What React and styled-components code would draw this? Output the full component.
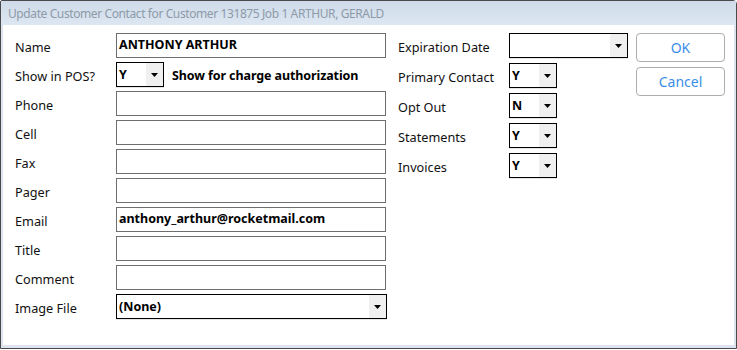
import React from "react";
import styled, { createGlobalStyle } from "styled-components";

const GlobalStyle = createGlobalStyle`
  html, body {
    margin: 0;
    padding: 0;
    background: #ffffff;
  }
  * {
    box-sizing: border-box;
  }
`;

const leftRows = [
  { label: "Name", value: "ANTHONY ARTHUR" },
  { label: "Show in POS?", pos: true },
  { label: "Phone", value: "" },
  { label: "Cell", value: "" },
  { label: "Fax", value: "" },
  { label: "Pager", value: "" },
  { label: "Email", value: "anthony_arthur@rocketmail.com" },
  { label: "Title", value: "" },
  { label: "Comment", value: "" },
  { label: "Image File", value: "(None)", select: true },
];

const rightRows = [
  { label: "Expiration Date", value: "", wide: true },
  { label: "Primary Contact", value: "Y" },
  { label: "Opt Out", value: "N" },
  { label: "Statements", value: "Y" },
  { label: "Invoices", value: "Y" },
];

const Arrow = () => (
  <svg width="7" height="4" viewBox="0 0 7 4">
    <path d="M0 0 H7 L3.5 4 Z" fill="#000" />
  </svg>
);

const Dropdown = ({ value, width }) => (
  <SelectBox $width={width}>
    <SelectValue>{value}</SelectValue>
    <ArrowButton>
      <Arrow />
    </ArrowButton>
  </SelectBox>
);

const App = () => {
  return (
    <>
      <GlobalStyle />
      <Window>
        <TitleBar>Update Customer Contact for Customer 131875 Job 1 ARTHUR, GERALD</TitleBar>
        <Body>
          <LeftColumn>
            {leftRows.map((row) => (
              <Row key={row.label}>
                <Label $width={101}>{row.label}</Label>
                {row.pos ? (
                  <>
                    <Dropdown value="Y" width={48} />
                    <Hint>Show for charge authorization</Hint>
                  </>
                ) : row.select ? (
                  <Dropdown value={row.value} width={271} />
                ) : (
                  <TextBox>{row.value}</TextBox>
                )}
              </Row>
            ))}
          </LeftColumn>
          <RightColumn>
            {rightRows.map((row) => (
              <RightRow key={row.label}>
                <Label $width={111}>{row.label}</Label>
                <Dropdown value={row.value} width={row.wide ? 119 : 48} />
              </RightRow>
            ))}
          </RightColumn>
          <Buttons>
            <Button>OK</Button>
            <Button>Cancel</Button>
          </Buttons>
        </Body>
      </Window>
    </>
  );
};

export default App;

const Window = styled.div`
  width: 737px;
  height: 349px;
  border: 1px solid #4a4a4a;
  border-top-right-radius: 4px;
  border-top-left-radius: 2px;
  background: #dce5ef;
  display: flex;
  flex-direction: column;
  font-family: "Noto Sans", "Open Sans", sans-serif;
`;

const TitleBar = styled.div`
  height: 24px;
  flex: none;
  padding: 4px 0 0 7px;
  font-size: 12px;
  color: #8d9aa8;
  background: linear-gradient(#cfdbe9, #dde7f2);
  white-space: nowrap;
  letter-spacing: -0.4px;
`;

const Body = styled.div`
  flex: 1;
  margin: 0 2px 3px 2px;
  background: #ffffff;
  display: flex;
  align-items: flex-start;
  padding: 8px 0 0 12px;
`;

const LeftColumn = styled.div`
  display: flex;
  flex-direction: column;
  gap: 4px;
  width: 371px;
`;

const Row = styled.div`
  display: flex;
  align-items: center;
  height: 25px;
`;

const RightColumn = styled.div`
  display: flex;
  flex-direction: column;
  gap: 5px;
  margin-left: 12px;
  width: 230px;
`;

const RightRow = styled.div`
  display: flex;
  align-items: center;
  height: 25px;
`;

const Label = styled.div`
  width: ${(p) => p.$width}px;
  flex: none;
  font-size: 12.7px;
  color: #111;
  white-space: nowrap;
  padding-top: 2px;
`;

const TextBox = styled.div`
  width: 271px;
  height: 25px;
  border: 1px solid #6e6e6e;
  padding: 2px 0 0 2px;
  font-weight: bold;
  font-size: 12.5px;
  color: #000;
  white-space: nowrap;
`;

const SelectBox = styled.div`
  width: ${(p) => p.$width}px;
  height: 25px;
  border: 1px solid #000;
  display: flex;
  flex: none;
  box-shadow: 0 1px 0 #e6e6e6;
`;

const SelectValue = styled.div`
  flex: 1;
  padding: 3px 0 0 2px;
  font-weight: bold;
  font-size: 12.5px;
  color: #000;
  white-space: nowrap;
`;

const ArrowButton = styled.div`
  width: 17px;
  background: #f0f0f0;
  display: flex;
  align-items: center;
  justify-content: center;
`;

const Hint = styled.div`
  margin-left: 8px;
  font-weight: bold;
  font-size: 12.5px;
  color: #000;
  white-space: nowrap;
  padding-top: 1px;
  letter-spacing: -0.1px;
`;

const Buttons = styled.div`
  display: flex;
  flex-direction: column;
  gap: 5px;
  margin-left: 8px;
`;

const Button = styled.button`
  width: 89px;
  height: 29px;
  border: 1px solid #adadad;
  border-radius: 4px;
  background: #ffffff;
  color: #3b8ee8;
  font-family: "Noto Sans", "Open Sans", sans-serif;
  font-size: 14px;
  padding: 0;
`;
